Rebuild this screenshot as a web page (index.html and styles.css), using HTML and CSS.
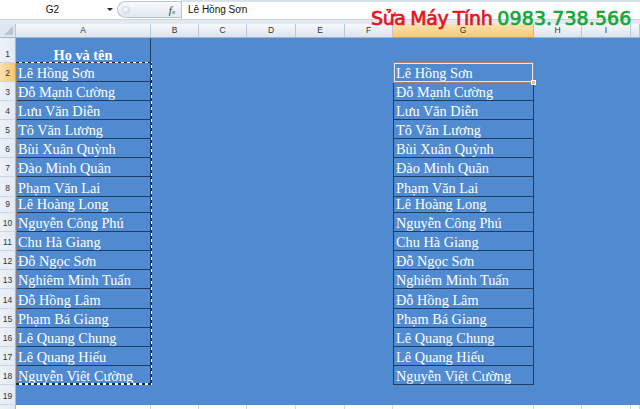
FILE: index.html
```html
<!DOCTYPE html>
<html lang="vi">
<head>
<meta charset="utf-8">
<title>Excel</title>
<link rel="stylesheet" href="styles.css">
</head>
<body>
<div class="app">
  <div class="fbar">
    <div class="namebox">G2</div>
    <div class="nb-arrow"></div>
    <div class="knob"><span class="dot"></span><span class="fx">f<span class="x">x</span></span></div>
    <div class="formula">Lê Hồng Sơn</div>
  </div>
  <div class="band"></div>
  <div class="sheet">
    <div class="row hdr">
      <div class="corner"><span class="tri"></span></div>
      <div class="ch">A</div><div class="ch">B</div><div class="ch">C</div><div class="ch">D</div><div class="ch">E</div><div class="ch">F</div><div class="ch sel">G</div><div class="ch">H</div><div class="ch">I</div><div class="ch"></div>
    </div>
    <div class="row h25"><div class="rh">1</div><div class="c a head">Họ và tên</div></div>
    <div class="row h19"><div class="rh sel">2</div><div class="c a b">Lê Hồng Sơn</div><div class="c g">Lê Hồng Sơn</div></div>
    <div class="row h19"><div class="rh">3</div><div class="c a b">Đỗ Mạnh Cường</div><div class="c g">Đỗ Mạnh Cường</div></div>
    <div class="row h19"><div class="rh">4</div><div class="c a b">Lưu Văn Diễn</div><div class="c g">Lưu Văn Diễn</div></div>
    <div class="row h19"><div class="rh">5</div><div class="c a b">Tô Văn Lương</div><div class="c g">Tô Văn Lương</div></div>
    <div class="row h19"><div class="rh">6</div><div class="c a b">Bùi Xuân Quỳnh</div><div class="c g">Bùi Xuân Quỳnh</div></div>
    <div class="row h19"><div class="rh">7</div><div class="c a b">Đào Minh Quân</div><div class="c g">Đào Minh Quân</div></div>
    <div class="row h20"><div class="rh">8</div><div class="c a b">Phạm Văn Lai</div><div class="c g">Phạm Văn Lai</div></div>
    <div class="row h16"><div class="rh">9</div><div class="c a b">Lê Hoàng Long</div><div class="c g">Lê Hoàng Long</div></div>
    <div class="row h19"><div class="rh">10</div><div class="c a b">Nguyễn Công Phú</div><div class="c g">Nguyễn Công Phú</div></div>
    <div class="row h19"><div class="rh">11</div><div class="c a b">Chu Hà Giang</div><div class="c g">Chu Hà Giang</div></div>
    <div class="row h19"><div class="rh">12</div><div class="c a b">Đỗ Ngọc Sơn</div><div class="c g">Đỗ Ngọc Sơn</div></div>
    <div class="row h19"><div class="rh">13</div><div class="c a b">Nghiêm Minh Tuấn</div><div class="c g">Nghiêm Minh Tuấn</div></div>
    <div class="row h20"><div class="rh">14</div><div class="c a b">Đỗ Hồng Lâm</div><div class="c g">Đỗ Hồng Lâm</div></div>
    <div class="row h19"><div class="rh">15</div><div class="c a b">Phạm Bá Giang</div><div class="c g">Phạm Bá Giang</div></div>
    <div class="row h19"><div class="rh">16</div><div class="c a b">Lê Quang Chung</div><div class="c g">Lê Quang Chung</div></div>
    <div class="row h19"><div class="rh">17</div><div class="c a b">Lê Quang Hiếu</div><div class="c g">Lê Quang Hiếu</div></div>
    <div class="row h19"><div class="rh">18</div><div class="c a b">Nguyễn Việt Cường</div><div class="c g">Nguyễn Việt Cường</div></div>
    <div class="row h20"><div class="rh">19</div></div>
    <div class="row blank">
      <div class="rh"></div><div class="w"></div><div class="w"></div><div class="w"></div><div class="w"></div><div class="w"></div><div class="w"></div><div class="w"></div><div class="w"></div><div class="w"></div><div class="w"></div>
    </div>
    <div class="ants"></div>
    <div class="active"><span class="handle"></span></div>
  </div>
  <div class="brand"><span class="red">Sửa Máy Tính</span> <span class="green">0983.738.566</span></div>
</div>
</body>
</html>
```
FILE: styles.css
```css
* { box-sizing: border-box; }
html, body { margin: 0; padding: 0; background: #fff; }
.app {
  position: relative;
  width: 640px;
  height: 409px;
  overflow: hidden;
  font-family: "Liberation Sans", Arial, sans-serif;
}

/* formula bar */
.fbar {
  display: flex;
  height: 19px;
  background: #fff;
  align-items: stretch;
}
.namebox {
  width: 105px;
  font-size: 10px;
  line-height: 19px;
  text-align: center;
  color: #111;
}
.nb-arrow {
  width: 12px;
  position: relative;
}
.nb-arrow::after {
  content: "";
  position: absolute;
  left: 2px;
  top: 8px;
  border-left: 3px solid transparent;
  border-right: 3px solid transparent;
  border-top: 3px solid #222;
}
.knob {
  width: 64px;
  margin: 1px 0 1px 0;
  border: 1px solid #b9c5d3;
  border-right: none;
  border-radius: 9px 0 0 9px;
  background: linear-gradient(#f7f9fc, #e3e9f1);
  display: flex;
  align-items: center;
  justify-content: space-between;
  padding: 0 6px 0 4px;
}
.dot {
  width: 8px;
  height: 8px;
  border-radius: 50%;
  background: radial-gradient(circle at 40% 40%, #fff, #cfd6df);
  border: 1px solid #d5dbe3;
}
.fx {
  font-family: "Liberation Serif", serif;
  font-style: italic;
  font-size: 11px;
  color: #333;
}
.fx .x { font-size: 7px; }
.formula {
  flex: 1;
  border-left: 1px solid #b9c5d3;
  border-top: 2px solid #d8e1ec;
  padding-left: 6px;
  font-size: 10px;
  line-height: 16px;
  color: #111;
}
.band {
  height: 5px;
  background: #e2e8f0;
  border-top: 1px solid #ccd5e0;
}

/* sheet */
.sheet {
  position: relative;
  background: #508ad0;
}
.row {
  display: grid;
  grid-template-columns: 16px 135px 48px 48px 49px 49px 48px 141px 48px 49px 9px;
}
.h25 { height: 25px; }
.h20 { height: 20px; }
.h19 { height: 19px; }
.h16 { height: 16px; }

.hdr {
  height: 14px;
  background: #fff;
}
.corner {
  position: relative;
  background: #dfe6ef;
  border-right: 1px solid #b5c4d6;
  border-bottom: 1px solid #9eb6ce;
}
.tri {
  position: absolute;
  right: 2px;
  bottom: 2px;
  border-left: 9px solid transparent;
  border-bottom: 9px solid #b7c5d6;
}
.ch {
  background: linear-gradient(#f6f8fc, #dce4ef);
  border-right: 1px solid #b8c7d9;
  border-bottom: 1px solid #9eb6ce;
  font-size: 8.5px;
  line-height: 13px;
  text-align: center;
  color: #333;
}
.ch.sel {
  background: linear-gradient(#fbe3b4, #f5c874);
  border-bottom: 1px solid #f29436;
  border-right-color: #e4b56c;
}
.rh {
  grid-column: 1;
  background: linear-gradient(90deg, #eef2f8, #e2e9f3);
  border-right: 1px solid #9eb6ce;
  border-bottom: 1px solid #c9d5e4;
  font-size: 8.5px;
  line-height: 10px;
  color: #333;
  display: flex;
  align-items: flex-end;
  justify-content: center;
  padding-bottom: 3px;
}
.rh.sel {
  background: linear-gradient(90deg, #fbe0ad, #f5c570);
  border-right-color: #f29436;
}

.c {
  font-family: "Liberation Serif", "Times New Roman", serif;
  font-size: 14.3px;
  line-height: 16px;
  color: #fff;
  white-space: nowrap;
  overflow: hidden;
  display: flex;
  align-items: flex-end;
  padding-left: 2px;
}
.a {
  grid-column: 2;
  border-right: 1px solid #203c64;
}
.a.b { border-bottom: 1px solid #203c64; }
.head {
  justify-content: center;
  font-weight: bold;
  padding-bottom: 0;
  padding-left: 0;
}
.g {
  grid-column: 8;
  border-left: 1px solid #203c64;
  border-right: 1px solid #203c64;
  border-bottom: 1px solid #203c64;
}

.blank {
  height: 10px;
  background: #fff;
}
.blank .rh { border-bottom: none; }
.w {
  border-right: 1px solid #d0d7e5;
  background: #fff;
}

/* overlays */
.ants {
  position: absolute;
  left: 16px;
  top: 38px;
  width: 136px;
  height: 323px;
  background:
    repeating-linear-gradient(90deg, #1b2538 0 3px, #fff 3px 6px) top left / 100% 1px no-repeat,
    repeating-linear-gradient(90deg, #1b2538 0 3px, #fff 3px 6px) bottom left / 100% 2px no-repeat,
    repeating-linear-gradient(180deg, #b0764f 0 3px, #508ad0 3px 6px) top left / 1px 100% no-repeat,
    repeating-linear-gradient(180deg, #1b2538 0 3px, #fff 3px 6px) top right / 1px 100% no-repeat;
}
.active {
  position: absolute;
  left: 393px;
  top: 38px;
  width: 141px;
  height: 21px;
  border: 1px solid #b47f60;
  box-shadow: inset 0 0 0 1px #f6e1d3;
}
.handle {
  position: absolute;
  right: -3px;
  bottom: -3px;
  width: 5px;
  height: 5px;
  background: #e7b897;
  border: 1px solid #fff;
}

.brand {
  position: absolute;
  left: 371px;
  top: 6px;
  font-family: "DejaVu Sans", sans-serif;
  font-weight: normal;
  font-size: 19px;
  line-height: 24px;
  white-space: nowrap;
  -webkit-text-stroke: 0.7px currentColor;
  word-spacing: -1px;
}
.red { color: #e8131c; letter-spacing: -0.4px; }
.green { color: #16a73a; letter-spacing: 0.1px; }
```
